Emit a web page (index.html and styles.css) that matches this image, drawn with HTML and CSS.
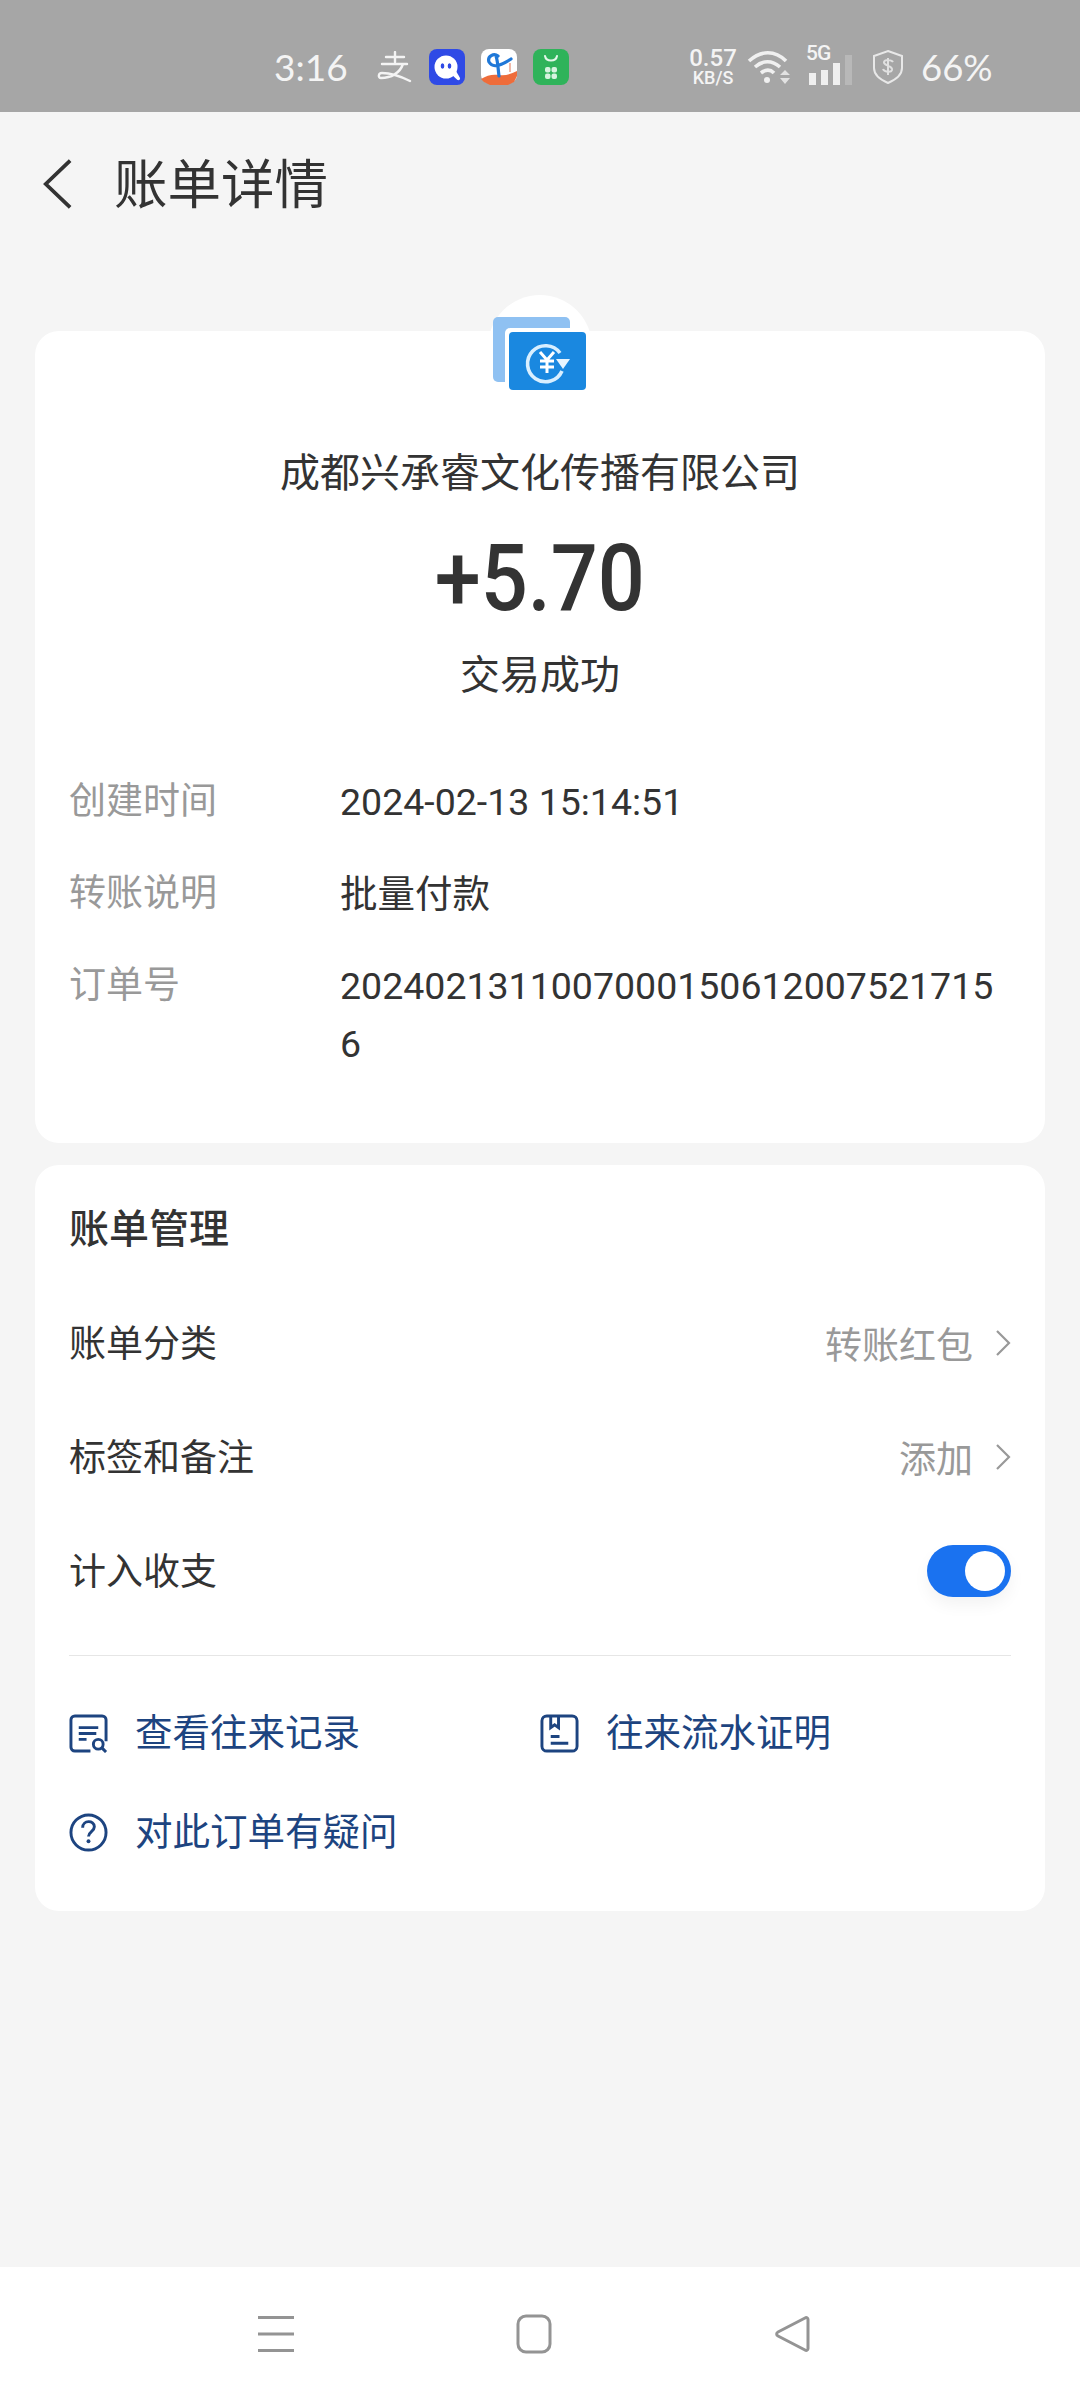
FILE: index.html
```html
<!DOCTYPE html>
<html lang="zh-CN">
<head>
    <meta charset="UTF-8">
    <meta name="viewport" content="width=device-width, initial-scale=1.0">
    <title>账单详情</title>
    <link rel="stylesheet" href="styles.css">
</head>
<body>
    <div class="status-bar">
        <span class="clock">3:16</span>
        <div class="app-icons">
            <svg class="pay-glyph" viewBox="0 0 36 32"><path d="M9 6h18M18 1v10M5 13h25M26 13c-3 9-12 14-22 14-3 0-3-5 1-5 8 0 18 3 28 8" fill="none" stroke="#f4f4f4" stroke-width="2.400" stroke-linecap="round"/></svg>
            <svg class="app-icon" viewBox="0 0 36 36"><rect width="36" height="36" rx="8" fill="#2f4ae6"/><circle cx="17" cy="18" r="11.500" fill="#fff"/><path d="M22 25l5-3 4 7c.5 1.500-1 2.500-2.500 2z" fill="#fff"/><ellipse cx="13.500" cy="17" rx="1.800" ry="2.800" fill="#2f4ae6"/><ellipse cx="20.500" cy="17" rx="1.800" ry="2.800" fill="#2f4ae6"/></svg>
            <svg class="app-icon" viewBox="0 0 36 36"><rect width="36" height="34" rx="8" fill="#fff"/><path d="M0 30c6-4 12-5 18-4s12-1 18-4v5l-3 6-6 3H9l-6-3z" fill="#ee6c3a"/><path d="M8 13c-2-6 5-9 9-6M8 13c3 5 9 4 13 2 3-1 6-3 9-5M15 7c2 6 2 13 3 20" fill="none" stroke="#1f78d8" stroke-width="3.200" stroke-linecap="round"/><path d="M29 14v9" stroke="#f0b9a8" stroke-width="2"/></svg>
            <svg class="app-icon" viewBox="0 0 36 36"><rect width="36" height="36" rx="8" fill="#2fb35a"/><path d="M12 7c1 6 11 6 12 0" fill="none" stroke="#e4f7ea" stroke-width="2" stroke-linecap="round"/><rect x="12" y="18" width="5.500" height="5.500" rx="2" fill="#d6f3df"/><rect x="18.500" y="18" width="5.500" height="5.500" rx="2" fill="#d6f3df"/><rect x="12" y="24.500" width="5.500" height="5.500" rx="2" fill="#d6f3df"/><rect x="18.500" y="24.500" width="5.500" height="5.500" rx="2" fill="#d6f3df"/></svg>
        </div>
        <div class="net-speed"><span class="speed-num">0.57</span><span class="speed-unit">KB/S</span></div>
        <svg class="wifi" viewBox="0 0 46 36"><path d="M2 12C14 1 28 1 39 12M8 18c8-7 17-7 25 0M14 24c5-4 9-4 13 0" fill="none" stroke="#f0f0f0" stroke-width="3.600"/><circle cx="20" cy="31" r="3" fill="#f0f0f0"/><path d="M38 21l5 5H33zM38 35l5-6H33z" fill="#e2e2e2"/></svg>
        <div class="signal">
            <span class="signal-tag">5G</span>
            <i class="bar bar-1"></i><i class="bar bar-2"></i><i class="bar bar-3"></i><i class="bar bar-4"></i>
        </div>
        <svg class="shield" viewBox="0 0 34 36"><path d="M17 2l14 5v12c0 7-7 12-14 15C10 31 3 26 3 19V7z" fill="none" stroke="#e8e8e8" stroke-width="2"/><path d="M22 13c-1-2-8-3-9 0-1 4 9 3 8 8-1 3-8 2-9-1M17 9v17" fill="none" stroke="#e0e0e0" stroke-width="2"/></svg>
        <span class="battery">66%</span>
    </div>

    <header class="top-nav">
        <svg class="back" viewBox="0 0 32 54"><path d="M30 2L4 27l26 25" fill="none" stroke="#333" stroke-width="4"/></svg>
        <h1>账单详情</h1>
    </header>

    <main>
        <section class="card card-bill">
            <div class="logo-round">
                <svg viewBox="0 0 94 74"><rect width="77" height="65" rx="5" fill="#8fc1f2"/><rect x="12" y="11" width="85" height="66" rx="5" fill="#fff"/><rect x="16" y="15" width="77" height="58" rx="4" fill="#1a88e0"/><path d="M67 36a18 18 0 1 0 2 18" fill="none" stroke="#d9efff" stroke-width="3.600"/><path d="M63 42h14l-7 10z" fill="#e8f5ff"/><path d="M47 35l7 8 7-8M47 44h14M47 50h14M54 43v13" fill="none" stroke="#fff" stroke-width="3"/></svg>
            </div>
            <div class="payer">成都兴承睿文化传播有限公司</div>
            <div class="amount">+5.70</div>
            <div class="state">交易成功</div>
            <dl class="details">
                <div class="detail-row"><dt>创建时间</dt><dd>2024-02-13 15:14:51</dd></div>
                <div class="detail-row"><dt>转账说明</dt><dd>批量付款</dd></div>
                <div class="detail-row"><dt>订单号</dt><dd>20240213110070001506120075217156</dd></div>
            </dl>
        </section>

        <section class="card card-manage">
            <h2>账单管理</h2>
            <div class="manage-row">
                <span class="manage-label">账单分类</span>
                <span class="manage-value">转账红包<svg class="chevron" viewBox="0 0 16 28"><path d="M2 2l12 12L2 26" fill="none" stroke="#999" stroke-width="2.200"/></svg></span>
            </div>
            <div class="manage-row">
                <span class="manage-label">标签和备注</span>
                <span class="manage-value">添加<svg class="chevron" viewBox="0 0 16 28"><path d="M2 2l12 12L2 26" fill="none" stroke="#999" stroke-width="2.200"/></svg></span>
            </div>
            <div class="manage-row">
                <span class="manage-label">计入收支</span>
                <span class="switch"><i class="knob"></i></span>
            </div>
            <div class="links">
                <a href="#" class="link">
                    <svg viewBox="0 0 40 40"><path d="M22 38H6a4 4 0 0 1-4-4V6a4 4 0 0 1 4-4h28a4 4 0 0 1 4 4v22" fill="none" stroke="#1d4480" stroke-width="3"/><path d="M10 14h20M10 20h18M10 26h8" fill="none" stroke="#1d4480" stroke-width="3"/><circle cx="30" cy="31" r="5" fill="none" stroke="#1d4480" stroke-width="3"/><path d="M34 35l4 4" stroke="#1d4480" stroke-width="3"/></svg>
                    查看往来记录
                </a>
                <a href="#" class="link">
                    <svg viewBox="0 0 40 40"><rect x="2" y="2" width="36" height="36" rx="5" fill="none" stroke="#1d4480" stroke-width="3"/><path d="M11 2v12l4-3 4 3V2M11 23h9M11 30h18" fill="none" stroke="#1d4480" stroke-width="3"/></svg>
                    往来流水证明
                </a>
                <a href="#" class="link">
                    <svg viewBox="0 0 40 40"><circle cx="20" cy="20" r="18" fill="none" stroke="#1d4480" stroke-width="3"/><path d="M14 15c0-8 12-8 12-1 0 5-6 5-6 10" fill="none" stroke="#1d4480" stroke-width="3"/><circle cx="20" cy="29" r="2" fill="#1d4480"/></svg>
                    对此订单有疑问
                </a>
            </div>
        </section>
    </main>

    <nav class="nav-bar">
        <svg class="nav-menu" viewBox="0 0 36 36"><path d="M0 2h36M0 18.500h36M0 35h36" stroke="#949494" stroke-width="3"/></svg>
        <svg class="nav-home" viewBox="0 0 36 40"><rect x="2" y="2" width="32" height="36" rx="8" fill="none" stroke="#949494" stroke-width="3"/></svg>
        <svg class="nav-back" viewBox="0 0 36 38"><path d="M31 3c1.500-1 3-.2 3 1.500v29c0 1.700-1.500 2.500-3 1.500L4 21c-1.800-1-1.800-3 0-4z" fill="none" stroke="#949494" stroke-width="3"/></svg>
    </nav>
</body>
</html>
```

FILE: styles.css
```css
/* Page */
body {
    margin: 0;
    width: 1080px;
    height: 2400px;
    background-color: #f5f5f5;
    color: #333;
    font-family: "Roboto", "Noto Sans CJK SC", sans-serif;
    display: flex;
    flex-direction: column;
    overflow: hidden;
}

/* Status bar */
.status-bar {
    height: 112px;
    background-color: #a6a6a6;
    color: #f4f4f4;
    display: flex;
    align-items: center;
    padding: 21px 0 0 274px;
    box-sizing: border-box;
    flex-shrink: 0;
}

.clock {
    font-family: "Lato", sans-serif;
    font-size: 37px;
    width: 103px;
}

.app-icons {
    display: flex;
    align-items: center;
    gap: 16px;
}

.pay-glyph {
    width: 36px;
    height: 32px;
}

.app-icon {
    width: 36px;
    height: 36px;
}

.net-speed {
    margin-left: 118px;
    width: 52px;
    display: flex;
    flex-direction: column;
    align-items: center;
    font-weight: 500;
    line-height: 1;
}

.speed-num {
    font-size: 24px;
    line-height: 21px;
}

.speed-unit {
    font-size: 18px;
    line-height: 17px;
}

.wifi {
    width: 46px;
    height: 36px;
    margin-left: 8px;
}

.signal {
    margin-left: 12px;
    width: 47px;
    height: 36px;
    padding-left: 4px;
    box-sizing: border-box;
    position: relative;
    display: flex;
    align-items: flex-end;
    gap: 5px;
}

.signal-tag {
    position: absolute;
    left: 1px;
    top: -6px;
    font-size: 21px;
    font-weight: 500;
    letter-spacing: -1px;
    line-height: 20px;
}

.bar {
    width: 7px;
    background-color: #efefef;
}

.bar-1 { height: 12px; }
.bar-2 { height: 15px; }
.bar-3 { height: 22px; }
.bar-4 { height: 30px; background-color: #b8b8b8; }

.shield {
    width: 34px;
    height: 36px;
    margin-left: 19px;
}

.battery {
    font-family: "Lato", sans-serif;
    font-size: 36.5px;
    margin-left: 16px;
}

/* Title bar */
.top-nav {
    height: 142px;
    display: flex;
    align-items: center;
    padding: 2px 0 0 42px;
    box-sizing: border-box;
    flex-shrink: 0;
}

.back {
    width: 30px;
    height: 52px;
}

.top-nav h1 {
    margin: 4px 0 0 42px;
    font-size: 53.5px;
    font-weight: 400;
    line-height: 60px;
}

/* Cards */
main {
    flex: 1;
    padding: 77px 35px 0;
    display: flex;
    flex-direction: column;
    gap: 22px;
}

.card {
    background-color: #fff;
    border-radius: 24px;
    padding: 0 34px;
}

.card-bill {
    height: 812px;
    box-sizing: border-box;
    display: flex;
    flex-direction: column;
    align-items: center;
    position: relative;
}

.logo-round {
    position: absolute;
    top: -36px;
    left: 453px;
    width: 104px;
    height: 104px;
    background-color: #fff;
    border-radius: 50%;
    display: flex;
    justify-content: center;
    padding-top: 22px;
    box-sizing: border-box;
}

.logo-round svg {
    width: 94px;
    height: 74px;
}

.payer {
    margin-top: 115px;
    font-size: 40px;
    line-height: 56px;
}

.amount {
    margin-top: 25px;
    font-size: 92px;
    font-weight: 500;
    line-height: 104px;
    transform: scaleX(0.9);
}

.state {
    margin-top: 17px;
    font-size: 40px;
    line-height: 56px;
}

.details {
    margin: 69px 0 0;
    align-self: stretch;
}

.detail-row {
    display: flex;
    margin-bottom: 34px;
    font-size: 37.5px;
    line-height: 58px;
}

.detail-row dt {
    width: 271px;
    font-size: 37px;
    color: #999;
    flex-shrink: 0;
}

.detail-row dd {
    margin: 0;
    min-width: 0;
    flex: 1;
    word-break: break-all;
}

.card-manage {
    height: 746px;
    box-sizing: border-box;
    padding-top: 36px;
}

.card-manage h2 {
    margin: 0 0 27px;
    font-size: 40px;
    font-weight: 500;
    line-height: 58px;
}

.manage-row {
    height: 114px;
    display: flex;
    align-items: center;
    justify-content: space-between;
    font-size: 37px;
}

.manage-label {
    margin-bottom: 5px;
}

.manage-value {
    color: #999;
    display: flex;
    align-items: center;
    gap: 22px;
}

.chevron {
    width: 16px;
    height: 28px;
}

.switch {
    width: 84px;
    height: 52px;
    background-color: #1a72f0;
    border-radius: 26px;
    display: flex;
    align-items: center;
    justify-content: flex-end;
    padding-right: 6px;
    box-sizing: border-box;
    box-shadow: 0 8px 16px rgba(0, 0, 0, 0.05);
}

.knob {
    width: 40px;
    height: 40px;
    background-color: #fff;
    border-radius: 50%;
}

.links {
    margin-top: 27px;
    padding-top: 48px;
    border-top: 1px solid #e6e6e6;
    display: grid;
    grid-template-columns: 471px 1fr;
    row-gap: 41px;
}

.link {
    display: flex;
    align-items: center;
    gap: 27px;
    font-size: 37.5px;
    line-height: 58px;
    color: #1d4480;
    text-decoration: none;
}

.link svg {
    width: 39px;
    height: 39px;
    flex-shrink: 0;
}

/* Bottom navigation */
.nav-bar {
    height: 133px;
    background-color: #fff;
    display: flex;
    align-items: center;
    padding: 0 0 0 258px;
    flex-shrink: 0;
}

.nav-menu {
    width: 36px;
    height: 37px;
}

.nav-home {
    width: 36px;
    height: 40px;
    margin-left: 222px;
}

.nav-back {
    width: 36px;
    height: 38px;
    margin-left: 222px;
}
```
